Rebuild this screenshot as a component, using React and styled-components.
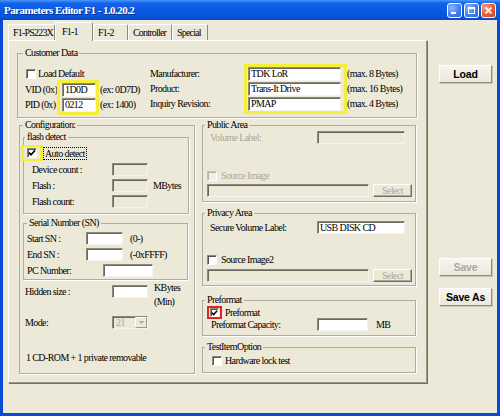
import React from 'react';
import styled, { createGlobalStyle } from 'styled-components';

const GlobalStyle = createGlobalStyle`
  * { box-sizing: border-box; }
  html, body { margin: 0; padding: 0; background: #ffffff; }
  body {
    font-family: "Liberation Serif", "Times New Roman", serif;
    font-size: 10px;
    letter-spacing: -0.6px;
    color: #000;
  }
`;

const Window = styled.div`
  width: 500px;
  height: 416px;
  display: flex;
  flex-direction: column;
  background: #0a49d8;
  overflow: hidden;
`;

const TitleBar = styled.div`
  flex: none;
  height: 20px;
  display: flex;
  align-items: center;
  padding: 0 4px 0 4px;
  background: linear-gradient(180deg, #4a96fb 0%, #1463ea 16%, #0a5ae3 50%, #0755dd 82%, #0b48bf 100%);
`;

const Title = styled.div`
  flex: 1;
  color: #fff;
  font-weight: bold;
  font-size: 11px;
  letter-spacing: -0.55px;
  text-shadow: 1px 1px 0 #0b3190;
  white-space: nowrap;
`;

const CaptionButtons = styled.div`
  display: flex;
  gap: 2px;
`;

const CaptionButton = styled.div`
  width: 15px;
  height: 15px;
  border: 1px solid #fff;
  border-radius: 3px;
  display: flex;
  align-items: center;
  justify-content: center;
  background: ${p => p.$close
    ? 'radial-gradient(circle at 30% 30%, #f5a07f, #e2582f 60%, #c8411d)'
    : 'radial-gradient(circle at 30% 30%, #8ab8ff, #4380f0 55%, #2a5fdb)'};
`;

const Body = styled.div`
  flex: 1;
  margin: 0 3px 3px;
  background: #ece9d8;
  display: flex;
  align-items: flex-start;
  padding: 2px 0 0 5px;
`;

const TabControl = styled.div`
  width: 419px;
  display: flex;
  flex-direction: column;
`;

const TabStrip = styled.div`
  height: 18px;
  display: flex;
  align-items: flex-end;
  position: relative;
  z-index: 1;
`;

const Tab = styled.div`
  flex: none;
  width: ${p => p.$w}px;
  height: ${p => (p.$active ? 19 : 16)}px;
  margin-bottom: ${p => (p.$active ? -1 : 0)}px;
  padding-left: ${p => (p.$active ? 6 : 4)}px;
  line-height: ${p => (p.$active ? 17 : 15)}px;
  letter-spacing: -0.8px;
  background: #ece9d8;
  border-top: 1px solid #fff;
  border-left: 1px solid #fff;
  border-right: 1px solid #8d8a7a;
  border-radius: 2px 2px 0 0;
  white-space: nowrap;
  overflow: hidden;
`;

const TabPanel = styled.div`
  height: 343px;
  background: #ece9d8;
  border: 1px solid;
  border-color: #fff #9d9a8a #9d9a8a #fff;
  box-shadow: 1px 1px 0 #716f64;
  padding: 6px 0 0 8px;
  display: flex;
  flex-direction: column;
  align-items: flex-start;
`;

const Group = styled.fieldset`
  margin: ${p => p.$m || '0'};
  width: ${p => p.$w}px;
  height: ${p => p.$h}px;
  min-width: 0;
  padding: ${p => p.$pad || '0'};
  border: 1px solid #b0ad9c;
  box-shadow: 1px 1px 0 #fff;
  display: flex;
  flex-direction: column;
  align-items: flex-start;
`;

const Legend = styled.legend`
  margin-left: ${p => p.$x || 0}px;
  padding: 0 2px;
  height: 12px;
  line-height: 12px;
  white-space: nowrap;
`;

const Cluster = styled.div`
  display: flex;
  align-items: flex-start;
  margin-top: ${p => p.$mt || 0}px;
`;

const Stack = styled.div`
  flex: none;
  display: flex;
  flex-direction: column;
  gap: ${p => p.$gap || 0}px;
  width: ${p => (p.$w ? `${p.$w}px` : 'auto')};
  padding-top: ${p => p.$pt || 0}px;
  margin-left: ${p => p.$ml || 0}px;
  margin-top: ${p => p.$mt || 0}px;
  align-self: flex-start;
`;

const Row = styled.div`
  flex: none;
  display: flex;
  align-items: center;
  height: ${p => p.$h ?? 13}px;
  margin-top: ${p => p.$mt || 0}px;
  margin-left: ${p => p.$ml || 0}px;
`;

const Text = styled.span`
  flex: none;
  white-space: nowrap;
  width: ${p => (p.$w ? `${p.$w}px` : 'auto')};
  margin-left: ${p => p.$ml || 0}px;
  color: ${p => (p.$disabled ? '#aca899' : '#000')};
  line-height: 14px;
  height: 14px;
`;

const Focus = styled.span`
  flex: none;
  white-space: nowrap;
  border: 1px dotted #000;
  padding: 0 1px;
  height: 13px;
  line-height: 11px;
`;

const Edit = styled.div`
  flex: none;
  width: ${p => p.$w}px;
  height: ${p => p.$h ?? 13}px;
  background: ${p => (p.$disabled ? '#ece9d8' : '#fff')};
  border: 1px solid;
  border-color: #8d8a7a #f4f3ee #f4f3ee #8d8a7a;
  box-shadow: inset 1px 1px 0 #6a685e;
  padding-left: 2px;
  line-height: ${p => (p.$h ?? 13) - 2}px;
  white-space: nowrap;
  overflow: hidden;
`;

const Box = styled.span`
  flex: none;
  width: ${p => p.$s ?? 10}px;
  height: ${p => p.$s ?? 10}px;
  margin-left: ${p => p.$ml || 0}px;
  background: ${p => (p.$disabled ? '#f1efe6' : '#fff')};
  border: 1px solid;
  border-color: ${p => (p.$disabled ? '#c4c1b1 #fff #fff #c4c1b1' : '#8d8a7a #fff #fff #8d8a7a')};
  box-shadow: inset 1px 1px 0 ${p => (p.$disabled ? '#b9b6a6' : '#55534b')};
  display: flex;
  align-items: center;
  justify-content: center;
`;

const Highlight = styled.div`
  flex: none;
  display: flex;
  flex-direction: ${p => (p.$col ? 'column' : 'row')};
  gap: ${p => p.$gap || 0}px;
  border-style: solid;
  border-color: ${p => p.$c || '#f4ef3a'};
  border-width: ${p => p.$bw || '3px'};
  padding: ${p => p.$pad || '0'};
  margin-left: ${p => p.$ml || 0}px;
`;

const SmallButton = styled.button`
  flex: none;
  width: 39px;
  height: 13px;
  margin-left: 4px;
  padding: 0;
  font: inherit;
  letter-spacing: -0.6px;
  line-height: 10px;
  color: ${p => (p.disabled ? '#aca899' : '#000')};
  background: #ece9d8;
  border: 1px solid;
  border-color: #fff #716f64 #716f64 #fff;
  box-shadow: inset -1px -1px 0 #aca899;
`;

const Combo = styled.div`
  flex: none;
  width: 36px;
  height: 13px;
  display: flex;
  align-items: center;
  background: #ece9d8;
  border: 1px solid;
  border-color: #8d8a7a #f4f3ee #f4f3ee #8d8a7a;
  box-shadow: inset 1px 1px 0 #6a685e;
  color: #aca899;
  padding-left: 3px;
`;

const ComboText = styled.span`
  flex: 1;
  line-height: 11px;
`;

const ComboArrow = styled.span`
  flex: none;
  width: 12px;
  height: 11px;
  display: flex;
  align-items: center;
  justify-content: center;
  background: #ece9d8;
  border: 1px solid;
  border-color: #fff #9d9a8a #9d9a8a #fff;
`;

const SideColumn = styled.div`
  flex: none;
  width: 53px;
  margin-left: 12px;
  display: flex;
  flex-direction: column;
`;

const PushButton = styled.button`
  flex: none;
  width: 53px;
  height: 18px;
  margin-top: ${p => p.$mt || 0}px;
  padding: 0;
  font-family: "Liberation Sans", Arial, sans-serif;
  font-weight: bold;
  font-size: 10.5px;
  letter-spacing: -0.2px;
  color: ${p => (p.disabled ? '#aca899' : '#000')};
  background: linear-gradient(#f6f5f0, #ebe8dc);
  border: 1px solid;
  border-color: #fff #8e8b7b #8e8b7b #fff;
  box-shadow: 1px 1px 0 #c9c6b6;
`;

const CheckMark = () => (
  <svg width="8" height="8" viewBox="0 0 8 8">
    <path d="M1 3.6 L3 5.8 L7 1.4" fill="none" stroke="#000" strokeWidth="1.7" />
  </svg>
);

const CheckBox = ({ checked, disabled, s, ml }) => (
  <Box $s={s} $ml={ml} $disabled={disabled}>{checked ? <CheckMark /> : null}</Box>
);

const Arrow = () => (
  <svg width="5" height="3" viewBox="0 0 5 3"><path d="M0 0 H5 L2.5 3 Z" fill="#aca899" /></svg>
);

export default function App() {
  return (
    <>
      <GlobalStyle />
      <Window>
        <TitleBar>
          <Title>Parameters Editor F1 - 1.0.20.2</Title>
          <CaptionButtons>
            <CaptionButton>
              <svg width="13" height="13" viewBox="0 0 13 13"><rect x="3" y="8" width="5" height="2" fill="#fff" /></svg>
            </CaptionButton>
            <CaptionButton>
              <svg width="13" height="13" viewBox="0 0 13 13">
                <rect x="3.5" y="3.5" width="6" height="6" fill="none" stroke="#fff" strokeWidth="1" />
                <rect x="3" y="3" width="7" height="2" fill="#fff" />
              </svg>
            </CaptionButton>
            <CaptionButton $close>
              <svg width="13" height="13" viewBox="0 0 13 13">
                <path d="M3.5 3.5 L9.5 9.5 M9.5 3.5 L3.5 9.5" stroke="#fff" strokeWidth="1.7" />
              </svg>
            </CaptionButton>
          </CaptionButtons>
        </TitleBar>
        <Body>
          <TabControl>
            <TabStrip>
              <Tab $w={47}>F1-PS223X</Tab>
              <Tab $w={38} $active>F1-1</Tab>
              <Tab $w={35}>F1-2</Tab>
              <Tab $w={44}>Controller</Tab>
              <Tab $w={36}>Special</Tab>
            </TabStrip>
            <TabPanel>
              <Group $w={400} $h={71} $pad="0 7px">
                <Legend $x={-2}>Customer Data</Legend>
                <Cluster>
                  <Stack $w={125} $pt={8}>
                    <Row $h={13}>
                      <CheckBox ml={1} />
                      <Text $ml={2}>Load Default</Text>
                    </Row>
                    <Cluster>
                      <Stack $w={32} $pt={3} $gap={1}>
                        <Text>VID (0x)</Text>
                        <Text>PID (0x)</Text>
                      </Stack>
                      <Highlight $col $gap={1} $pad="0 0 0 2px">
                        <Edit $w={34} $h={14}>1D0D</Edit>
                        <Edit $w={34} $h={14}>0212</Edit>
                      </Highlight>
                      <Stack $pt={3} $gap={1} $ml={1}>
                        <Text>(ex: 0D7D)</Text>
                        <Text>(ex: 1400)</Text>
                      </Stack>
                    </Cluster>
                  </Stack>
                  <Cluster $mt={5}>
                    <Stack $w={94} $pt={3} $gap={1}>
                      <Text>Manufacturer:</Text>
                      <Text>Product:</Text>
                      <Text>Inquiry Revision:</Text>
                    </Stack>
                    <Highlight $col $gap={1} $pad="0 3px 0 1px">
                      <Edit $w={93} $h={14}>TDK LoR</Edit>
                      <Edit $w={93} $h={14}>Trans-It Drive</Edit>
                      <Edit $w={93} $h={14}>PMAP</Edit>
                    </Highlight>
                    <Stack $pt={3} $gap={1}>
                      <Text>(max. 8 Bytes)</Text>
                      <Text>(max. 16 Bytes)</Text>
                      <Text>(max. 4 Bytes)</Text>
                    </Stack>
                  </Cluster>
                </Cluster>
              </Group>

              <Cluster $mt={1}>
                <Group $w={176} $h={255} $m="0 0 0 2px" $pad="0 0 0 3px">
                  <Legend $x={0}>Configuration:</Legend>
                  <Group $w={166} $h={83} $pad="0 0 0 8px">
                    <Legend $x={-7}>flash detect</Legend>
                    <Row $h={16} $mt={2}>
                      <Highlight $ml={-11} $bw="2px 3px" $pad="1px 3px">
                        <CheckBox checked />
                      </Highlight>
                      <Focus>Auto detect</Focus>
                    </Row>
                    <Row $mt={2}>
                      <Text $w={80}>Device count :</Text>
                      <Edit $w={36} $disabled />
                    </Row>
                    <Row $mt={3}>
                      <Text $w={80}>Flash :</Text>
                      <Edit $w={36} $disabled />
                      <Text $ml={5}>MBytes</Text>
                    </Row>
                    <Row $mt={3}>
                      <Text $w={80}>Flash count:</Text>
                      <Edit $w={36} $disabled />
                    </Row>
                  </Group>
                  <Group $w={165} $h={63} $m="3px 0 0 0" $pad="0 0 0 3px">
                    <Legend $x={0}>Serial Number (SN)</Legend>
                    <Row $mt={3}>
                      <Text $w={59}>Start SN :</Text>
                      <Edit $w={37} />
                      <Text $ml={7}>(0-)</Text>
                    </Row>
                    <Row $mt={3}>
                      <Text $w={59}>End SN :</Text>
                      <Edit $w={37} />
                      <Text $ml={7}>(-0xFFFF)</Text>
                    </Row>
                    <Row $mt={3}>
                      <Text $w={76}>PC Number:</Text>
                      <Edit $w={50} />
                    </Row>
                  </Group>
                  <Row $mt={5} $ml={2}>
                    <Text $w={87}>Hidden size :</Text>
                    <Edit $w={36} />
                    <Stack $ml={6} $mt={-4}>
                      <Text>KBytes</Text>
                      <Text>(Min)</Text>
                    </Stack>
                  </Row>
                  <Row $mt={18} $ml={2}>
                    <Text $w={87}>Mode:</Text>
                    <Combo>
                      <ComboText>21</ComboText>
                      <ComboArrow><Arrow /></ComboArrow>
                    </Combo>
                  </Row>
                  <Row $mt={23} $ml={3} $h={12}>
                    <Text>1 CD-ROM + 1 private removable</Text>
                  </Row>
                </Group>

                <Stack $w={214} $ml={7}>
                  <Group $w={214} $h={83} $pad="0 0 0 4px">
                    <Legend $x={-2}>Public Area</Legend>
                    <Row>
                      <Text $w={107} $ml={3} $disabled>Volume Label:</Text>
                      <Edit $w={88} $disabled />
                    </Row>
                    <Row $mt={26} $h={12}>
                      <CheckBox disabled />
                      <Text $ml={4} $disabled>Source Image</Text>
                    </Row>
                    <Row $mt={2}>
                      <Edit $w={162} $disabled />
                      <SmallButton disabled>Select</SmallButton>
                    </Row>
                  </Group>
                  <Group $w={214} $h={79} $m="5px 0 0 0" $pad="0 0 0 4px">
                    <Legend $x={-2}>Privacy Area</Legend>
                    <Row $mt={2}>
                      <Text $w={107} $ml={3}>Secure Volume Label:</Text>
                      <Edit $w={88}>USB DISK CD</Edit>
                    </Row>
                    <Row $mt={20} $h={12}>
                      <CheckBox />
                      <Text $ml={4}>Source Image2</Text>
                    </Row>
                    <Row $mt={3}>
                      <Edit $w={162} $disabled />
                      <SmallButton disabled>Select</SmallButton>
                    </Row>
                  </Group>
                  <Group $w={214} $h={42} $m="8px 0 0 0" $pad="0 0 0 4px">
                    <Legend $x={-2}>Preformat</Legend>
                    <Row $h={13}>
                      <Highlight $c="#e02424" $bw="2px" $pad="0 1px">
                        <CheckBox checked s={9} />
                      </Highlight>
                      <Text $ml={3}>Preformat</Text>
                    </Row>
                    <Row $mt={-1}>
                      <Text $w={106} $ml={4}>Preformat Capacity:</Text>
                      <Edit $w={51} />
                      <Text $ml={8}>MB</Text>
                    </Row>
                  </Group>
                  <Group $w={214} $h={32} $m="5px 0 0 0" $pad="0 0 0 4px">
                    <Legend $x={-2}>TestItemOption</Legend>
                    <Row $mt={2} $h={12}>
                      <CheckBox ml={5} />
                      <Text $ml={3}>Hardware lock test</Text>
                    </Row>
                  </Group>
                </Stack>
              </Cluster>
            </TabPanel>
          </TabControl>
          <SideColumn>
            <PushButton $mt={43}>Load</PushButton>
            <PushButton $mt={175} disabled>Save</PushButton>
            <PushButton $mt={12}>Save As</PushButton>
          </SideColumn>
        </Body>
      </Window>
    </>
  );
}
